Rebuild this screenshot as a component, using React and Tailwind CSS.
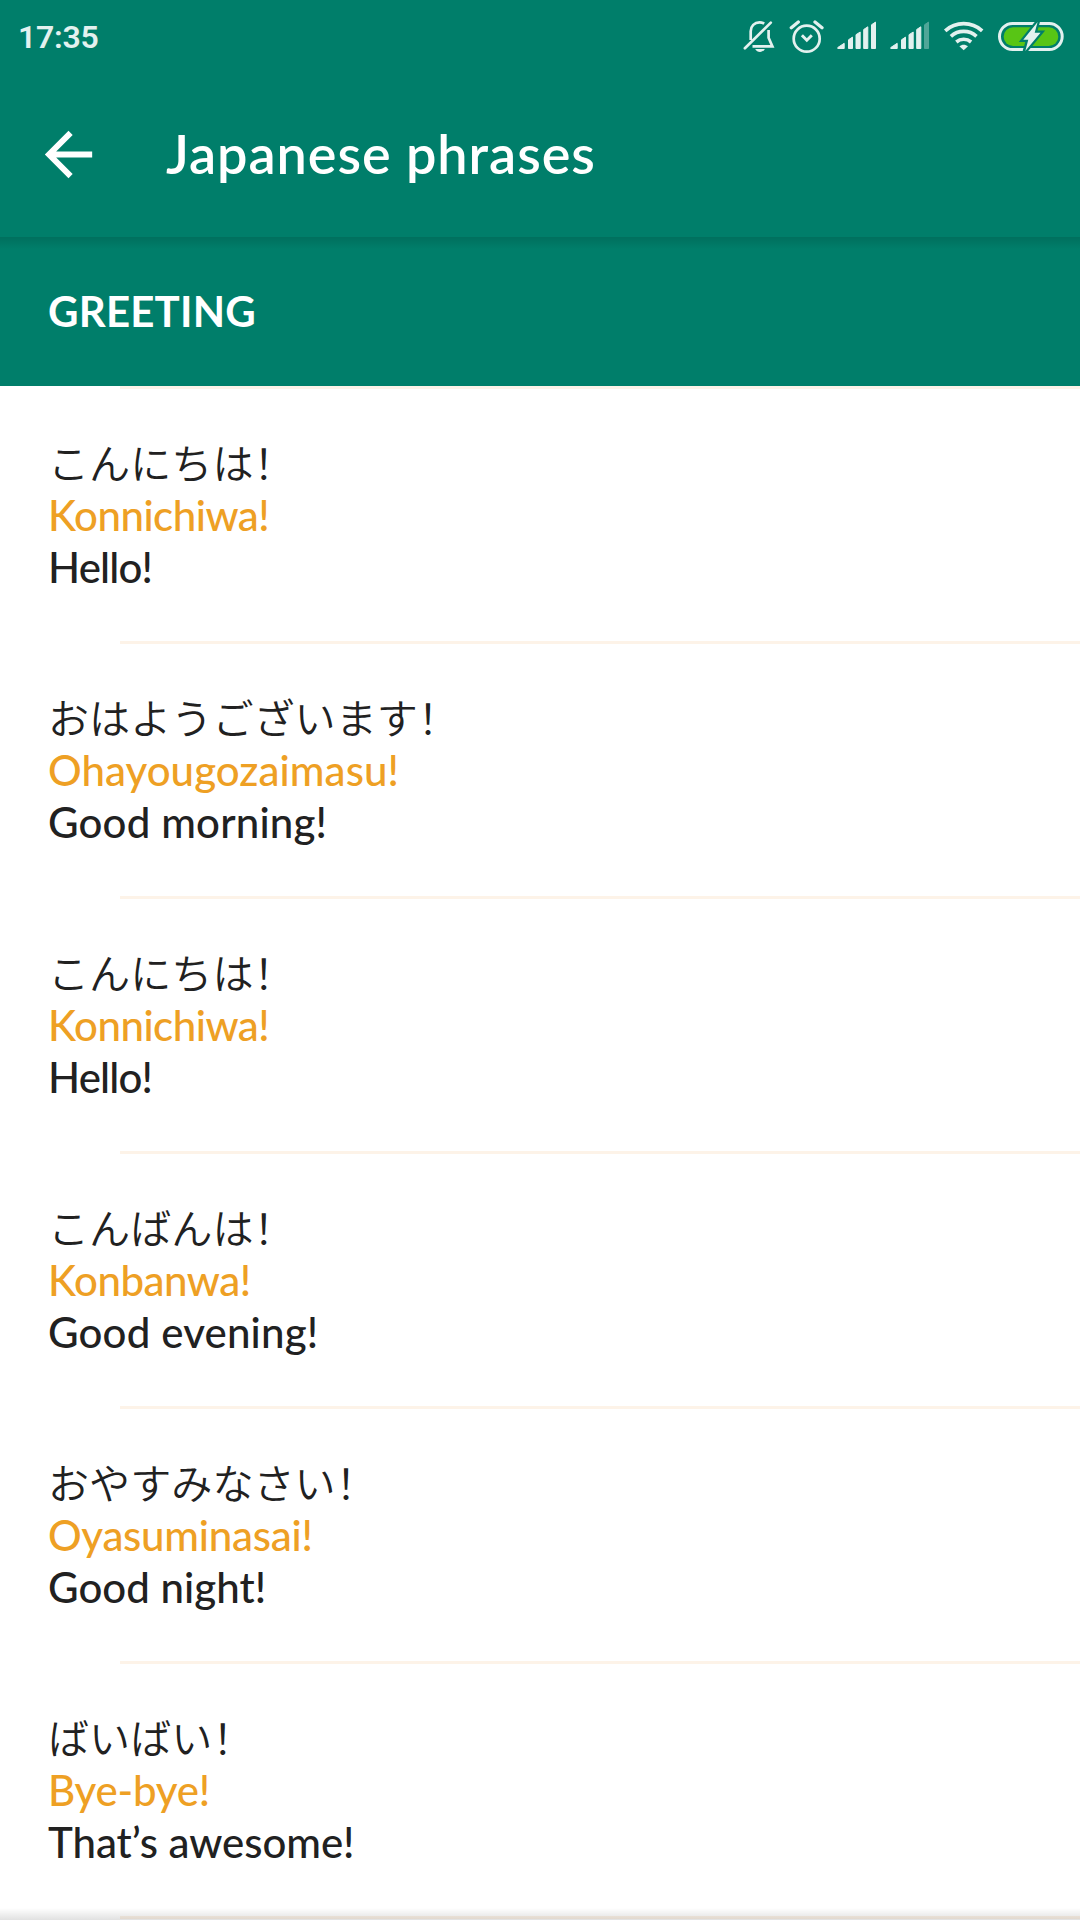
const phrases = [
  { ja: 'こんにちは！', romaji: 'Konnichiwa!', en: 'Hello!', romajiCls: 'tracking-[-0.5px]', enCls: 'tracking-[-0.84px]' },
  { ja: 'おはようございます！', romaji: 'Ohayougozaimasu!', en: 'Good morning!', romajiCls: 'tracking-[0.06px]', enCls: 'tracking-[0.17px]' },
  { ja: 'こんにちは！', romaji: 'Konnichiwa!', en: 'Hello!', romajiCls: 'tracking-[-0.5px]', enCls: 'tracking-[-0.84px]' },
  { ja: 'こんばんは！', romaji: 'Konbanwa!', en: 'Good evening!', romajiCls: 'tracking-[-0.5px]', enCls: 'tracking-[0.17px]' },
  { ja: 'おやすみなさい！', romaji: 'Oyasuminasai!', en: 'Good night!', romajiCls: 'tracking-[-0.25px]', enCls: 'tracking-[0.02px]' },
  { ja: 'ばいばい！', romaji: 'Bye-bye!', en: 'That’s awesome!', romajiCls: 'tracking-[-0.2px]', enCls: 'tracking-[-0.06px]' },
]

function BellOff() {
  return (
    <svg width="46" height="36" viewBox="0 0 46 36" fill="none" stroke="currentColor" strokeWidth="2.7">
      <path d="M1.9 30.3 27.8 4.6" strokeLinecap="round" />
      <path d="M7.7 22V13.2C7.7 8 11.5 4.4 16.5 4.4c1.7 0 3.3.4 4.7 1.3" />
      <path d="M25.6 12v7.8l3.8 8.6H9.5" />
      <path d="M12.2 30.9h9.6c-1 2-2.7 3-4.8 3s-3.800-1-4.800-3z" fill="currentColor" stroke="none" />
    </svg>
  )
}

function Alarm() {
  return (
    <svg width="47" height="36" viewBox="0 0 47 36" fill="none" stroke="currentColor" strokeWidth="2.7">
      <circle cx="17.7" cy="20.7" r="13" />
      <path d="m12.9 17.3 4.9 4.9 5-4.9" strokeWidth="3" />
      <path d="m2.3 9.7 7-5.7M26 4l7 5.7" strokeWidth="3.3" strokeLinecap="round" />
    </svg>
  )
}

function Signal({ weak }) {
  return (
    <svg width="53" height="36" viewBox="0 0 53 36" fill="currentColor" stroke="currentColor" strokeWidth="1" strokeLinejoin="round">
      <path d="M1.8 30.5v-1l6.4-4.2v5.2z" />
      <path d="M12.5 30.5v-8.7l4-2.7v11.4z" />
      <path d="M20 30.5V16.7l4.2-2.7v16.5z" />
      <path d="M27.7 30.5v-19l4.1-2.7v21.7z" />
      <path d="M35.5 30.5V6.8l4-2.7v26.4z" opacity={weak ? 0.35 : 1} />
    </svg>
  )
}

function Wifi() {
  return (
    <svg width="55" height="36" viewBox="0 0 55 36" fill="none" stroke="currentColor" strokeWidth="3.6">
      <path d="M3.200 12.800a27.500 27.500 0 0 1 37 0" />
      <path d="M8.900 18.300a19 19 0 0 1 25.600 0" />
      <path d="M14.300 24a11.500 11.500 0 0 1 14.800 0" />
      <path d="M17.400 28.300c2.500-2.200 6.100-2.200 8.600 0l-4.300 4z" fill="currentColor" stroke="none" />
    </svg>
  )
}

function Battery() {
  return (
    <svg width="68" height="36" viewBox="0 0 68 36" fill="none">
      <rect x="2.5" y="5.5" width="62.7" height="26" rx="13" stroke="currentColor" strokeWidth="3" />
      <rect x="6.7" y="9.3" width="54.6" height="18.8" rx="9.4" fill="#58c515" />
      <path d="M40.8 3.500 37.700 14.700h5.800L27.800 33.500l3.500-11.800h-5z" fill="#007e6a" stroke="#007e6a" strokeWidth="4.4" />
      <path d="M40.600 4 37.700 14.700h5.800L28.300 33l3-11.300h-5z" fill="currentColor" />
    </svg>
  )
}

function StatusBar() {
  return (
    <div className="flex h-[72px] items-center pl-[18px] text-[#e3f1ef]">
      <span className="pt-px font-['Roboto',sans-serif] text-[32px] leading-[36px] font-semibold tracking-[-0.25px]">17:35</span>
      <div className="mr-[15px] ml-auto flex">
        <BellOff />
        <Alarm />
        <Signal />
        <Signal weak />
        <Wifi />
        <Battery />
      </div>
    </div>
  )
}

function Phrase({ ja, romaji, en, romajiCls, enCls }) {
  return (
    <li className="flex flex-col">
      <div className="ml-[120px] h-[3px] bg-[#fdf3e8]" />
      <div className="flex h-[252px] flex-col pt-[46px] pl-12 text-[42px] leading-[52px] font-medium">
        <span lang="zh-CN" className="h-[54px] font-['Noto_Sans_CJK_SC',sans-serif] text-[41.1px] font-[350]">{ja}</span>
        <span className={`text-[#eea024] ${romajiCls}`}>{romaji}</span>
        <span className={enCls}>{en}</span>
      </div>
    </li>
  )
}

export default function App() {
  return (
    <div className="relative h-[1920px] w-[1080px] overflow-hidden bg-white font-['Lato',sans-serif] text-[#212121]">
      <header className="h-[237px] bg-[#007e6a] text-white">
        <StatusBar />
        <div className="flex h-[165px] items-center pl-[33px]">
          <svg width="71" height="71" viewBox="0 0 24 24" fill="currentColor">
            <path d="M20 11H7.83l5.59-5.59L12 4l-8 8 8 8 1.41-1.41L7.83 13H20v-2z" />
          </svg>
          <h1 className="ml-[62px] pb-[2px] text-[54px] leading-[64px] font-semibold tracking-[0.95px]">Japanese phrases</h1>
        </div>
      </header>
      <div className="h-[149px] bg-[#007e6a] text-white">
        <div className="h-3 bg-linear-to-b from-black/12 to-transparent" />
        <h2 className="pt-9 pl-12 text-[42px] leading-[52px] font-bold tracking-[0.2px]">GREETING</h2>
      </div>
      <ul>
        {phrases.map((p, i) => <Phrase key={i} {...p} />)}
      </ul>
      <div className="ml-[120px] h-[3px] bg-[#fdf3e8]" />
      <div className="absolute inset-x-0 bottom-0 h-3 bg-linear-to-b from-transparent to-black/12" />
    </div>
  )
}
